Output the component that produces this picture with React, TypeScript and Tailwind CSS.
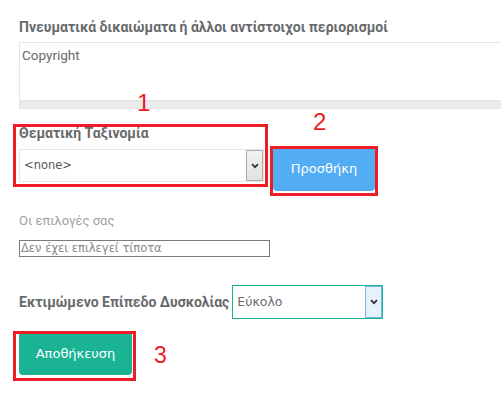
import React from "react";

const Chevron = () => (
  <svg width="8" height="6" viewBox="0 0 8 6" className="block">
    <path d="M1 1.2 L4 4.2 L7 1.2" fill="none" stroke="#333" strokeWidth="1.8" />
  </svg>
);

export default function App() {
  return (
    <div
      className="relative w-[501px] h-[417px] overflow-hidden bg-white text-[#676a6c]"
      style={{ fontFamily: "Roboto, 'Noto Sans', sans-serif" }}
    >
      <div className="pl-[19px] pt-[18px]">
        <div className="text-[14px] leading-[18px] font-bold whitespace-nowrap">
          Πνευματικά δικαιώματα ή άλλοι αντίστοιχοι περιορισμοί
        </div>
        <div className="mt-[6px] w-[520px] h-[67px] border border-[#e5e6e7] flex flex-col">
          <div className="flex-1 px-[2px] pt-[3px] text-[13.5px] leading-[18px] text-[#676a6c]">
            Copyright
          </div>
          <div className="h-[8px] bg-[#ebebeb] border-t border-[#e2e2e2]" />
        </div>

        <div className="mt-[15px] flex items-start">
          <div className="w-[245px]">
            <div className="text-[14px] leading-[18px] font-bold whitespace-nowrap">
              Θεματική Ταξινομία
            </div>
            <div className="mt-[7px] h-[33px] border border-[#e5e6e7] bg-white flex items-center justify-between pl-[4px] pr-0">
              <span
                className="text-[#555]"
                style={{ fontFamily: "'DejaVu Sans', Verdana, sans-serif", fontSize: "11.5px" }}
              >
                &lt;none&gt;
              </span>
              <div className="w-[17px] h-[31px] border border-[#adadad] bg-gradient-to-b from-[#f2f2f2] to-[#e1e1e1] flex items-center justify-center">
                <Chevron />
              </div>
            </div>
          </div>
          <div
            className="ml-[9px] mt-[23px] w-[102px] h-[44px] rounded-[4px] bg-[#52adf5] text-white flex items-center justify-center text-[13px]"
            style={{ fontFamily: "'DejaVu Sans', Verdana, sans-serif" }}
          >
            Προσθήκη
          </div>
        </div>

        <div className="mt-[21px] text-[13px] leading-[18px] text-[#a0a0a0]">
          Οι επιλογές σας
        </div>
        <div
          className="mt-[10px] w-[251px] h-[17px] border border-[#7a7a7a] text-[11.5px] leading-[15px] text-[#8a8a8a] px-[1px]"
          style={{ fontFamily: "'DejaVu Sans', Verdana, sans-serif" }}
        >
          Δεν έχει επιλεγεί τίποτα
        </div>

        <div className="mt-[28px] flex items-center">
          <div className="text-[14px] leading-[18px] font-bold whitespace-nowrap">
            Εκτιμώμενο Επίπεδο Δυσκολίας
          </div>
          <div className="ml-[3px] w-[151px] h-[34px] border border-[#1ab394] bg-white flex items-center justify-between pl-[4px]">
            <span
              className="text-[#676a6c]"
              style={{ fontFamily: "'DejaVu Sans', Verdana, sans-serif", fontSize: "12.5px" }}
            >
              Εύκολο
            </span>
            <div className="w-[17px] h-[32px] border border-[#7eb4ea] bg-[#e5f1fb] flex items-center justify-center">
              <Chevron />
            </div>
          </div>
        </div>

        <div
          className="mt-[13px] w-[113px] h-[43px] rounded-[4px] bg-[#1ab394] text-white flex items-center justify-center text-[13px]"
          style={{ fontFamily: "'DejaVu Sans', Verdana, sans-serif" }}
        >
          Αποθήκευση
        </div>
      </div>

      {/* annotations */}
      <div className="absolute left-[13px] top-[124px] w-[255px] h-[63px] border-[3px] border-[#ee1c25]" />
      <div className="absolute left-[270px] top-[146px] w-[108px] h-[50px] border-[3px] border-[#ee1c25]" />
      <div className="absolute left-[13px] top-[331px] w-[123px] h-[50px] border-[3px] border-[#ee1c25]" />
      <div
        className="absolute left-[137px] top-[89px] text-[24px] leading-[28px] text-[#ee1c25]"
        style={{ fontFamily: "'Liberation Sans', Arial, sans-serif" }}
      >
        1
      </div>
      <div
        className="absolute left-[313px] top-[108px] text-[24px] leading-[28px] text-[#ee1c25]"
        style={{ fontFamily: "'Liberation Sans', Arial, sans-serif" }}
      >
        2
      </div>
      <div
        className="absolute left-[154px] top-[341px] text-[23px] leading-[28px] text-[#ee1c25]"
        style={{ fontFamily: "'Liberation Sans', Arial, sans-serif" }}
      >
        3
      </div>
    </div>
  );
}
